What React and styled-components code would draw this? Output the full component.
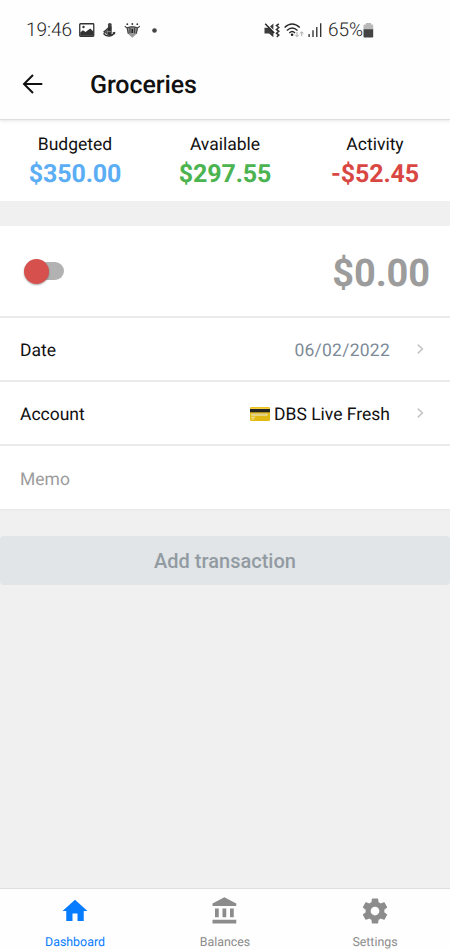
import React from 'react';
import styled, { createGlobalStyle } from 'styled-components';

const GlobalStyle = createGlobalStyle`
  *, *::before, *::after { box-sizing: border-box; }
  body {
    margin: 0;
    background: #f0f0f0;
    font-family: Roboto, "Liberation Sans", sans-serif;
    text-rendering: geometricPrecision;
  }
  svg { display: block; flex: none; }
`;

const Screen = styled.div`
  width: 450px;
  height: 950px;
  display: flex;
  flex-direction: column;
  overflow: hidden;
  background: #f0f0f0;
  color: #111;
`;

const Top = styled.div`
  position: relative;
  height: 119px;
  flex: none;
  background: #fefefe;
  box-shadow: 0 1px 1px #dedede, 0 2px 4px rgba(0, 0, 0, 0.09);
`;

const StatusBar = styled.div`
  height: 60px;
  padding: 0 76px 0 26px;
  display: flex;
  align-items: center;
  justify-content: space-between;
`;

const StatusGroup = styled.div`
  display: flex;
  align-items: center;
`;

const StatusText = styled.span`
  font-size: 19px;
  line-height: 22px;
  font-weight: 300;
  color: #1c1c1c;
`;

const Header = styled.header`
  height: 50px;
  padding-left: 21px;
  display: flex;
  align-items: center;
`;

const Title = styled.h1`
  margin: 0 0 0 45px;
  padding-top: 2px;
  font-size: 25px;
  line-height: 30px;
  font-weight: 500;
  letter-spacing: -0.1px;
`;

const Summary = styled.section`
  height: 82px;
  flex: none;
  padding-top: 15px;
  display: grid;
  grid-template-columns: repeat(3, 1fr);
  background: #fff;
`;

const SummaryItem = styled.div`
  display: flex;
  flex-direction: column;
  align-items: center;
`;

const SummaryLabel = styled.span`
  font-size: 17.5px;
  line-height: 22px;
`;

const SummaryValue = styled.span`
  margin-top: 5px;
  font-size: 25px;
  line-height: 28px;
  font-weight: 700;
  letter-spacing: -0.1px;
  color: ${(p) => p.$color};
`;

const Form = styled.section`
  margin-top: 25px;
  flex: none;
  background: #fff;
`;

const Row = styled.div`
  height: ${(p) => p.$height}px;
  padding: 0 20px;
  display: flex;
  align-items: center;
  border-bottom: 2px solid #ebebeb;
  font-size: 17.5px;
`;

const RowLabel = styled.span`
  flex: 1;
  padding-top: 4px;
  color: ${(p) => (p.$muted ? '#9c9c9c' : '#111')};
`;

const RowValue = styled.span`
  display: flex;
  align-items: center;
  gap: 4px;
  margin-right: 26px;
  padding-top: 4px;
  color: ${(p) => p.$color};
  letter-spacing: ${(p) => p.$spacing}px;

  svg { margin-top: -2px; }
`;

const Toggle = styled.div`
  width: 37px;
  height: 18px;
  margin-left: 7px;
  display: flex;
  align-items: center;
  border-radius: 9px;
  background: #b2b2b2;
`;

const ToggleKnob = styled.div`
  width: 25px;
  height: 25px;
  margin-left: -3px;
  flex: none;
  border-radius: 50%;
  background: #d6504e;
  box-shadow: 0 1px 2px rgba(0, 0, 0, 0.35);
`;

const Amount = styled.div`
  margin-left: auto;
  padding-top: 6px;
  font-size: 38px;
  line-height: 44px;
  font-weight: 700;
  letter-spacing: -0.1px;
  color: #9c9c9c;
`;

const AddButton = styled.button`
  height: 49px;
  margin: 25px 0 0;
  padding: 1px 0 0;
  flex: none;
  border: 0;
  border-radius: 4px;
  background: #e1e5e8;
  color: #929ba1;
  font: 500 20px/24px Roboto, "Liberation Sans", sans-serif;
`;

const Nav = styled.nav`
  height: 62px;
  margin-top: auto;
  flex: none;
  display: grid;
  grid-template-columns: repeat(3, 1fr);
  border-top: 1px solid #dedede;
  background: #fefefe;
`;

const NavItem = styled.div`
  padding-top: 7px;
  display: flex;
  flex-direction: column;
  align-items: center;
  gap: 9px;
  color: ${(p) => (p.$active ? '#087cff' : '#8c8c8c')};
  font-size: 12.4px;
  line-height: 16px;
`;

const PictureIcon = () => (
  <svg width="16" height="14" viewBox="0 0 16 14">
    <rect x="0.75" y="0.75" width="14" height="12.5" rx="0.8" fill="#fff" stroke="#333" strokeWidth="1.3" />
    <circle cx="4.5" cy="4" r="1.2" fill="#333" />
    <path d="M1.2 9.6 4 7.2 6.5 9 11.2 5.6 14.4 8.6V12.8H1.2Z" fill="#333" />
  </svg>
);

const AnchorIcon = () => (
  <svg width="13" height="14" viewBox="0 0 13 14">
    <circle cx="6.8" cy="2" r="2" fill="#444" />
    <path d="M5 3.2h3.8L8.6 12.2H4.6Z" fill="#333" />
    <path d="M5.5 5.2 1.2 8.7l1.3 1.2M.5 10.5c2.3 3.5 8.5 3.6 11-.8" fill="none" stroke="#333" strokeWidth="1.5" />
    <path d="M4.9 5.8 1.4 9.2l3.4 3.2Z" fill="#555" />
    <path d="m9.3 9.6 3-.8-.2 2.9Z" fill="#333" />
    <path d="M4 8.6h4" stroke="#aaa" strokeWidth=".7" />
  </svg>
);

const ShieldIcon = () => (
  <svg width="17" height="15" viewBox="0 0 17 15">
    <g fill="#333">
      <circle cx="3.3" cy="1.2" r="0.9" />
      <circle cx="8.3" cy="1" r="0.9" />
      <circle cx="13.3" cy="1.2" r="0.9" />
    </g>
    <path d="M2.6 4.6 4 10.8 8.3 14.7l4.3-3.9 1.4-6.2L8.3 3.3Z" fill="#999" />
    <path d="M.8 3.3 3 4.9Q8.3 2.8 13.6 4.9l2.2-1.6M3.2 5.2l1.1 5.4M13.4 5.2l-1.1 5.4M6 5v5.3M10.6 5v5.3" fill="none" stroke="#444" strokeWidth="1.2" />
    <path d="M8.3 5.8v4.2" stroke="#222" strokeWidth="1.7" />
  </svg>
);

const DotIcon = () => (
  <svg width="5" height="5" viewBox="0 0 5 5">
    <circle cx="2.5" cy="2.5" r="2.3" fill="#444" />
  </svg>
);

const MuteIcon = () => (
  <svg width="16" height="15" viewBox="0 0 16 15">
    <path d="M.5 4.8h4L9.4 9v5.2L5 10.6H.5Z" fill="#3c3c3c" />
    <path d="M6 3.5 9.4.5v6.2Z" fill="#3c3c3c" />
    <path d="m1.2.8 9 9.2" stroke="#222" strokeWidth="1.4" />
    <path d="m14.8.8-2.3 1.8 2.3 1.9-2.3 1.9 2.3 1.9-2.3 1.9 2.3 1.9-2 1.8" fill="none" stroke="#333" strokeWidth="1.5" />
  </svg>
);

const WifiIcon = () => (
  <svg width="20" height="15" viewBox="0 0 20 15">
    <g fill="none" stroke="#2a2a2a" strokeWidth="1.4">
      <path d="M.6 4.6Q8 -2.4 15.8 4.6" />
      <path d="M2.9 7.5Q8.2 2.5 13.5 7.5" />
      <path d="M5.3 9.9Q8.2 7.2 11 9.9" />
    </g>
    <circle cx="8.1" cy="11.7" r="1.3" fill="#222" />
    <path d="M13 9v4.6m-1.8-1.8 1.8 1.9 1.8-1.9M17.7 13V9m-1.6 1.5 1.6-1.8 1.6 1.8" fill="none" stroke="#aaa" strokeWidth="1" />
  </svg>
);

const SignalIcon = () => (
  <svg width="14" height="14" viewBox="0 0 14 14">
    <path d="M1.1 14v-3M5 14V7.2M8.8 14V4M12.7 14V.3" stroke="#2a2a2a" strokeWidth="1.3" />
  </svg>
);

const BatteryIcon = () => (
  <svg width="11" height="15" viewBox="0 0 11 15">
    <path d="M3 0h5v1.4h1.5Q10.2 1.4 10.2 2.2V7H.5V2.2Q.5 1.4 1.3 1.4H3Z" fill="#b9b9b9" />
    <path d="M.5 6.3h9.7v7.5q0 .8-.8.8H1.3q-.8 0-.8-.8Z" fill="#444" />
  </svg>
);

const BackIcon = () => (
  <svg width="24" height="22" viewBox="0 0 24 22">
    <path d="M21.3 10H3M12 1 3 10l9 9" fill="none" stroke="#111" strokeWidth="2" />
  </svg>
);

const ChevronIcon = () => (
  <svg width="14" height="12" viewBox="0 0 14 12">
    <path d="m1.8 1.6 4.6 4.4-4.6 4.4" fill="none" stroke="#c5c5c8" strokeWidth="1.5" />
  </svg>
);

const CardIcon = () => (
  <svg width="20" height="14" viewBox="0 0 20 14">
    <rect width="20" height="14" rx="1.2" fill="#e3b916" />
    <path d="M1 .4h18l1 1.6H0Z" fill="#f3cf3f" />
    <path d="M0 2h20v3.3H0Z" fill="#252525" />
    <path d="M1.2 6.6h16.3v2.2H1.2Z" fill="#eadb98" />
    <path d="M2.2 7.2h2m1 0h3m1 0h3m1 0h2" stroke="#c9b976" strokeWidth=".6" />
    <path d="M1.2 10.2h4M1.2 12h3" stroke="#f3e4a0" strokeWidth="1" />
  </svg>
);

const NAV_PATHS = {
  home: 'M10 20v-6h4v6h5v-8h3L12 3 2 12h3v8z',
  bank: 'M11.5 1 2 6v2h19V6M16 10v7h3v-7M2 22h19v-3H2M10 10v7h3v-7M4 10v7h3v-7H4Z',
  cog: 'M12,15.5A3.5,3.5 0 0,1 8.5,12A3.5,3.5 0 0,1 12,8.5A3.5,3.5 0 0,1 15.5,12A3.5,3.5 0 0,1 12,15.5M19.43,12.97C19.47,12.65 19.5,12.33 19.5,12C19.5,11.67 19.47,11.34 19.43,11L21.54,9.37C21.73,9.22 21.78,8.95 21.66,8.73L19.66,5.27C19.54,5.05 19.27,4.96 19.05,5.05L16.56,6.05C16.04,5.66 15.5,5.32 14.87,5.07L14.5,2.42C14.46,2.18 14.25,2 14,2H10C9.75,2 9.54,2.18 9.5,2.42L9.13,5.07C8.5,5.32 7.96,5.66 7.44,6.05L4.95,5.05C4.73,4.96 4.46,5.05 4.34,5.27L2.34,8.73C2.21,8.95 2.27,9.22 2.46,9.37L4.57,11C4.53,11.34 4.5,11.67 4.5,12C4.5,12.33 4.53,12.65 4.57,12.97L2.46,14.63C2.27,14.78 2.21,15.05 2.34,15.27L4.34,18.73C4.46,18.95 4.73,19.03 4.95,18.95L7.44,17.94C7.96,18.34 8.5,18.68 9.13,18.93L9.5,21.58C9.54,21.82 9.75,22 10,22H14C14.25,22 14.46,21.82 14.5,21.58L14.87,18.93C15.5,18.67 16.04,18.34 16.56,17.94L19.05,18.95C19.27,19.03 19.54,18.95 19.66,18.73L21.66,15.27C21.78,15.05 21.73,14.78 21.54,14.63L19.43,12.97Z',
};

const NavIcon = ({ name }) => (
  <svg width="30" height="30" viewBox="0 0 24 24" fill="currentColor">
    <path d={NAV_PATHS[name]} />
  </svg>
);

const LeftIcons = styled.div`
  display: flex;
  align-items: center;
  margin-left: 7px;
  gap: 8px;
`;

const DotSlot = styled.div`
  margin-left: 3px;
`;

const RightIcons = styled.div`
  display: flex;
  align-items: center;
  gap: 4px;
  margin-right: 6px;
`;

const summary = [
  { label: 'Budgeted', value: '$350.00', color: '#5badf4' },
  { label: 'Available', value: '$297.55', color: '#4bb350' },
  { label: 'Activity', value: '-$52.45', color: '#d94743' },
];

const tabs = [
  { label: 'Dashboard', icon: 'home', active: true },
  { label: 'Balances', icon: 'bank' },
  { label: 'Settings', icon: 'cog' },
];

export default function App() {
  return (
    <Screen>
      <GlobalStyle />
      <Top>
        <StatusBar>
          <StatusGroup>
            <StatusText>19:46</StatusText>
            <LeftIcons>
              <PictureIcon />
              <AnchorIcon />
              <ShieldIcon />
              <DotSlot><DotIcon /></DotSlot>
            </LeftIcons>
          </StatusGroup>
          <StatusGroup>
            <RightIcons>
              <MuteIcon />
              <WifiIcon />
              <SignalIcon />
            </RightIcons>
            <StatusText>65%</StatusText>
            <BatteryIcon />
          </StatusGroup>
        </StatusBar>
        <Header>
          <BackIcon />
          <Title>Groceries</Title>
        </Header>
      </Top>
      <Summary>
        {summary.map((s) => (
          <SummaryItem key={s.label}>
            <SummaryLabel>{s.label}</SummaryLabel>
            <SummaryValue $color={s.color}>{s.value}</SummaryValue>
          </SummaryItem>
        ))}
      </Summary>
      <Form>
        <Row $height={92}>
          <Toggle><ToggleKnob /></Toggle>
          <Amount>$0.00</Amount>
        </Row>
        <Row $height={64}>
          <RowLabel>Date</RowLabel>
          <RowValue $color="#7d8b98" $spacing={0.25}>06/02/2022</RowValue>
          <ChevronIcon />
        </Row>
        <Row $height={64}>
          <RowLabel>Account</RowLabel>
          <RowValue $color="#111" $spacing={0}><CardIcon />DBS Live Fresh</RowValue>
          <ChevronIcon />
        </Row>
        <Row $height={65}>
          <RowLabel $muted>Memo</RowLabel>
        </Row>
      </Form>
      <AddButton type="button">Add transaction</AddButton>
      <Nav>
        {tabs.map((t) => (
          <NavItem key={t.label} $active={t.active}>
            <NavIcon name={t.icon} />
            {t.label}
          </NavItem>
        ))}
      </Nav>
    </Screen>
  );
}
